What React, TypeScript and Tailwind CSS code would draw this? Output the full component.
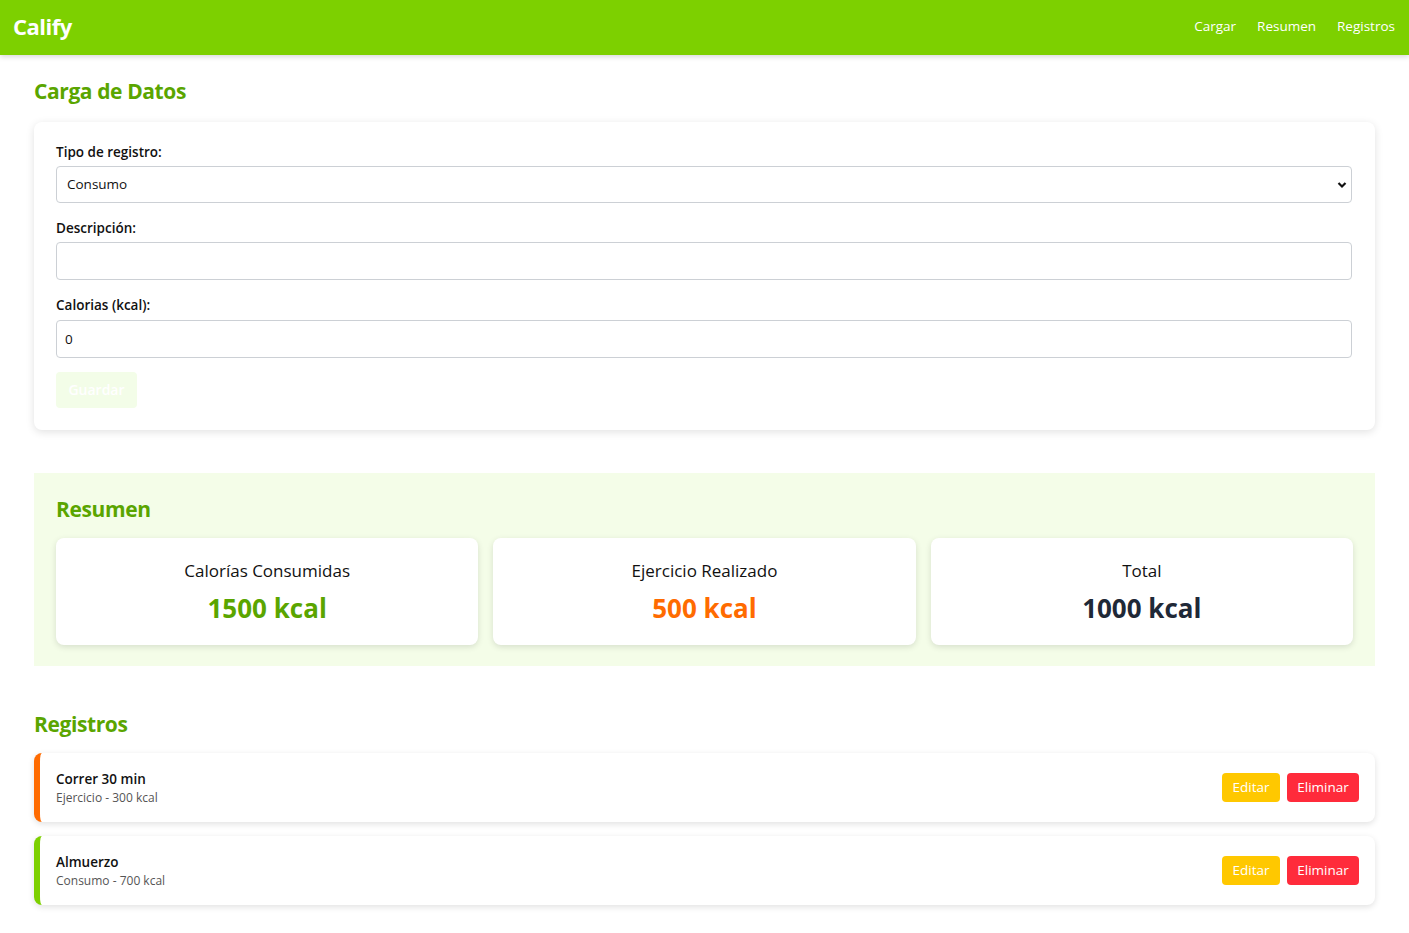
const registros = [
  { titulo: "Correr 30 min", tipo: "Ejercicio", kcal: 300, color: "border-l-[#ff6b00]" },
  { titulo: "Almuerzo", tipo: "Consumo", kcal: 700, color: "border-l-[#7dd000]" },
];

export default function App() {
  return (
    <div className="min-h-screen bg-white text-[#111] font-['Open_Sans',sans-serif]">
      {/* Header */}
      <header className="flex h-[55px] items-center justify-between bg-[#7dd000] pl-[13px] pr-[14px] shadow-[0_2px_5px_rgba(0,0,0,0.15)]">
        <h1 className="-mt-[2px] text-[22px] font-bold tracking-[-0.5px] text-white">Calify</h1>
        <nav className="-mt-[2px] flex gap-[21px] text-[13.5px] text-white">
          <a href="#">Cargar</a>
          <a href="#">Resumen</a>
          <a href="#">Registros</a>
        </nav>
      </header>

      <main className="px-[34px] pb-8">
        {/* Carga de datos */}
        <section>
          <h2 className="mt-[21px] mb-[14px] text-[21px] font-bold tracking-[-0.4px] text-[#5aa500]">Carga de Datos</h2>
          <div className="rounded-lg bg-white pl-[22px] pr-[23px] pt-[20px] pb-[22px] shadow-[0_2px_8px_rgba(0,0,0,0.12)]">
            <label className="mb-[4px] block text-[13.5px] font-semibold leading-[20px]">Tipo de registro:</label>
            <div className="relative">
              <select className="h-[37px] w-full appearance-none rounded border border-[#ccd0d5] bg-white px-[10px] text-[13.5px]">
                <option>Consumo</option>
                <option>Ejercicio</option>
              </select>
              <svg className="pointer-events-none absolute right-[5px] top-[15px]" width="10" height="8" viewBox="0 0 10 8">
                <path d="M1.5 2 L5 5.5 L8.5 2" fill="none" stroke="#111" strokeWidth="2.2" />
              </svg>
            </div>

            <label className="mt-[15px] mb-[4px] block text-[13.5px] font-semibold leading-[20px]">Descripción:</label>
            <input className="h-[38px] w-full rounded border border-[#ccd0d5] px-[8px] text-[13.5px]" />

            <label className="mt-[15px] mb-[5px] block text-[13.5px] font-semibold leading-[20px]">Calorias (kcal):</label>
            <input className="h-[38px] w-full rounded border border-[#ccd0d5] px-[8px] text-[13.5px]" defaultValue="0" />

            <button disabled className="mt-[14px] block h-[36px] w-[81px] rounded bg-[#f3fde8] text-[14px] font-semibold text-white">
              Guardar
            </button>
          </div>
        </section>

        {/* Resumen */}
        <section className="mt-[43px] bg-[#f4fde8] px-[22px] pt-[21px] pb-[21px]">
          <h2 className="mb-[13px] text-[21px] font-bold tracking-[-0.4px] text-[#5aa500]">Resumen</h2>
          <div className="grid grid-cols-3 gap-[15px]">
            <ResumenCard titulo="Calorías Consumidas" valor="1500 kcal" color="text-[#5aa500]" />
            <ResumenCard titulo="Ejercicio Realizado" valor="500 kcal" color="text-[#ff6b00]" />
            <ResumenCard titulo="Total" valor="1000 kcal" color="text-[#1f2937]" />
          </div>
        </section>

        {/* Registros */}
        <section className="mt-[43px]">
          <h2 className="mb-[12px] text-[21px] font-bold tracking-[-0.4px] text-[#5aa500]">Registros</h2>
          <ul className="flex flex-col gap-[14px]">
            {registros.map((r) => (
              <li
                key={r.titulo}
                className={`flex h-[69px] items-center justify-between rounded-lg border-l-[6px] ${r.color} bg-white pl-[16px] pr-[16px] shadow-[0_2px_6px_rgba(0,0,0,0.12)]`}
              >
                <div className="mt-[2px]">
                  <div className="text-[13.5px] font-semibold leading-[20px]">{r.titulo}</div>
                  <div className="text-[12px] leading-[18px] text-[#555]">
                    {r.tipo} - {r.kcal} kcal
                  </div>
                </div>
                <div className="flex gap-[7px]">
                  <button className="h-[29px] w-[58px] rounded bg-[#ffc800] text-[13.5px] text-white">Editar</button>
                  <button className="h-[29px] w-[72px] rounded bg-[#ff2b3b] text-[13.5px] text-white">Eliminar</button>
                </div>
              </li>
            ))}
          </ul>
        </section>
      </main>
    </div>
  );
}

function ResumenCard({ titulo, valor, color }: { titulo: string; valor: string; color: string }) {
  return (
    <div className="flex h-[107px] flex-col items-center justify-center rounded-lg bg-white shadow-[0_2px_6px_rgba(0,0,0,0.12)]">
      <div className="-mt-[1px] text-[17px] leading-[24px]">{titulo}</div>
      <div className={`mt-[9px] text-[26px] font-bold leading-[32px] ${color}`}>{valor}</div>
    </div>
  );
}
